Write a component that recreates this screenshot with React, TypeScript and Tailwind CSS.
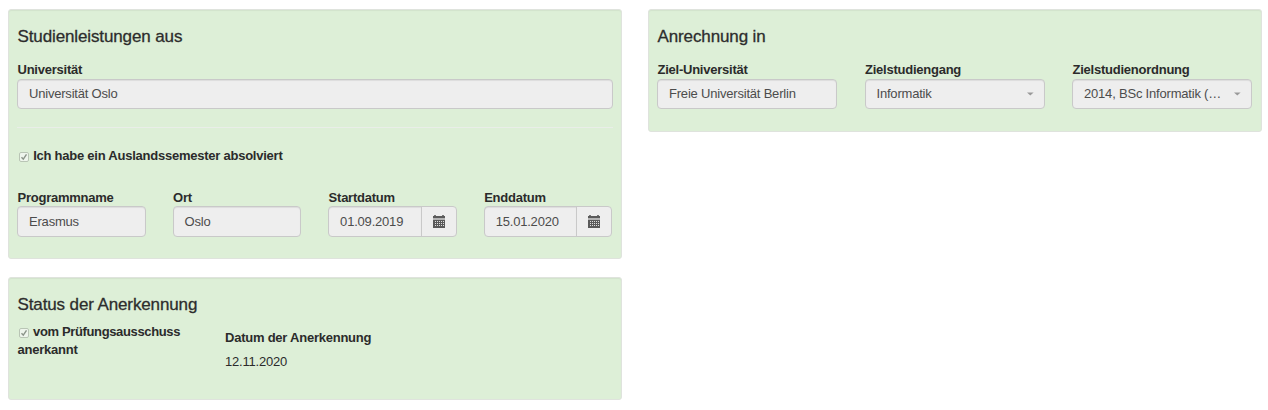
import type { ReactNode } from "react";
import clsx from "clsx";

function Panel({
  title,
  className,
  children,
}: {
  title: string;
  className?: string;
  children: ReactNode;
}) {
  return (
    <section
      className={clsx(
        "rounded-[3px] border border-[#dfe3dd] bg-[#ddefd7] px-2 shadow-[inset_0_1px_1px_rgba(0,0,0,0.05)]",
        className,
      )}
    >
      <h4 className="pt-[17px] pl-[0.5px] text-[17px] leading-[20px] font-medium tracking-[-0.12px] [-webkit-text-stroke:0.3px_#333]">
        {title}
      </h4>
      {children}
    </section>
  );
}

function Field({ label, children }: { label: string; children: ReactNode }) {
  return (
    <div className="min-w-0">
      <div className="h-[18px] pl-[0.5px] text-[13px] leading-[18px] font-bold tracking-[-0.24px] whitespace-nowrap">
        {label}
      </div>
      {children}
    </div>
  );
}

function TextInput({ value, tall }: { value: string; tall?: boolean }) {
  return (
    <div
      className={clsx(
        "flex items-center rounded-[4px] border border-[#c9c9c9] bg-[#eeeeee] px-[11px] text-[13px] text-[#4c4c4c] shadow-[inset_0_1px_1px_rgba(0,0,0,0.075)]",
        tall ? "-mt-px h-[31px]" : "h-[30px]",
      )}
    >
      {value}
    </div>
  );
}

function SelectBox({ value }: { value: string }) {
  return (
    <div className="flex h-[30px] items-center rounded-[4px] border border-[#c9c9c9] bg-[#eeeeee] pr-[10px] pl-[11px] text-[13px] text-[#4c4c4c] shadow-[inset_0_1px_1px_rgba(0,0,0,0.075)]">
      <span className="flex-1 whitespace-nowrap">{value}</span>
      <svg width="7" height="4" viewBox="0 0 7 4" className="shrink-0">
        <path d="M0 0.4h6.6L3.3 3.6z" fill="#999" />
      </svg>
    </div>
  );
}

function CalendarIcon() {
  return (
    <svg width="12" height="13" viewBox="0 0 12 13" shapeRendering="crispEdges">
      <path d="M1 0h2v1H1zM9 0h2v1H9z" fill="#777" />
      <path d="M0 1h12v2H0z" fill="#5a5a5a" />
      <path d="M0 3h12v2H0z" fill="#b4b4b4" />
      <path d="M0 5h12v8H0z" fill="#5a5a5a" />
      <path
        d="M2 6h1v1H2zM4 6h1v1H4zM6 6h1v1H6zM8 6h1v1H8zM10 6h1v1h-1zM2 8h1v1H2zM4 8h1v1H4zM6 8h1v1H6zM8 8h1v1H8zM10 8h1v1h-1zM2 10h1v1H2zM4 10h1v1H4zM6 10h1v1H6zM8 10h1v1H8zM10 10h1v1h-1z"
        fill="#ddd"
      />
    </svg>
  );
}

function DateInput({ value }: { value: string }) {
  return (
    <div className="-mt-px flex h-[31px] rounded-[4px] border border-[#c9c9c9] bg-[#eeeeee] text-[13px] text-[#4c4c4c]">
      <div className="flex flex-1 items-center rounded-l-[3px] pl-[11px] shadow-[inset_0_1px_1px_rgba(0,0,0,0.075)]">
        {value}
      </div>
      <div className="flex w-[35px] items-center justify-center border-l border-[#c9c9c9]">
        <CalendarIcon />
      </div>
    </div>
  );
}

function CheckMark() {
  return (
    <svg width="10" height="10" viewBox="0 0 10 10" className="mr-[0.8px] inline-block align-[-2px]">
      <rect x="0.5" y="0.5" width="9" height="9" rx="1.5" fill="#eef5ec" stroke="#b9c5b5" />
      <path d="M2.5 5.2l1.8 2 3.2-4.9" fill="none" stroke="#8b9489" strokeWidth="1.4" />
    </svg>
  );
}

export default function App() {
  return (
    <main className="flex h-[410px] w-[1268px] items-start gap-[26px] bg-white pt-[9px] pl-2 font-['Liberation_Sans',Arial,sans-serif] text-[13px] tracking-[-0.2px] text-[#2b2b2b]">
      <div className="flex w-[614px] flex-col gap-[18px]">
        <Panel title="Studienleistungen aus" className="h-[250px]">
          <div className="mt-[14px]">
            <Field label="Universität">
              <TextInput value="Universität Oslo" />
            </Field>
          </div>
          <hr className="mt-[18px] border-[#e9eee8]" />
          <div className="mt-[19px] pl-[2px] leading-[18px] font-bold tracking-[-0.24px]">
            <CheckMark /> Ich habe ein Auslandssemester absolviert
          </div>
          <div className="mt-[24px] grid w-[595.45px] grid-cols-4 gap-[26.8px]">
            <Field label="Programmname">
              <TextInput value="Erasmus" tall />
            </Field>
            <Field label="Ort">
              <TextInput value="Oslo" tall />
            </Field>
            <Field label="Startdatum">
              <DateInput value="01.09.2019" />
            </Field>
            <Field label="Enddatum">
              <DateInput value="15.01.2020" />
            </Field>
          </div>
        </Panel>

        <Panel title="Status der Anerkennung" className="h-[123px]">
          <div className="mt-2 grid grid-cols-3 gap-[26.6px] leading-[18px]">
            <div className="indent-[2px] font-bold tracking-[-0.36px]">
              <CheckMark /> vom Prüfungsausschuss
              <span className="block pl-[0.5px] indent-0 tracking-[-0.24px]">
                anerkannt
              </span>
            </div>
            <div className="pt-[6px] pl-[0.5px]">
              <div className="font-bold tracking-[-0.24px]">
                Datum der Anerkennung
              </div>
              <div className="mt-[6px]">12.11.2020</div>
            </div>
          </div>
        </Panel>
      </div>

      <Panel title="Anrechnung in" className="h-[123px] w-[614px]">
        <div className="mt-[14px] grid w-[595.45px] grid-cols-3 gap-[27.1px]">
          <Field label="Ziel-Universität">
            <TextInput value="Freie Universität Berlin" />
          </Field>
          <Field label="Zielstudiengang">
            <SelectBox value="Informatik" />
          </Field>
          <Field label="Zielstudienordnung">
            <SelectBox value="2014, BSc Informatik (…" />
          </Field>
        </div>
      </Panel>
    </main>
  );
}
